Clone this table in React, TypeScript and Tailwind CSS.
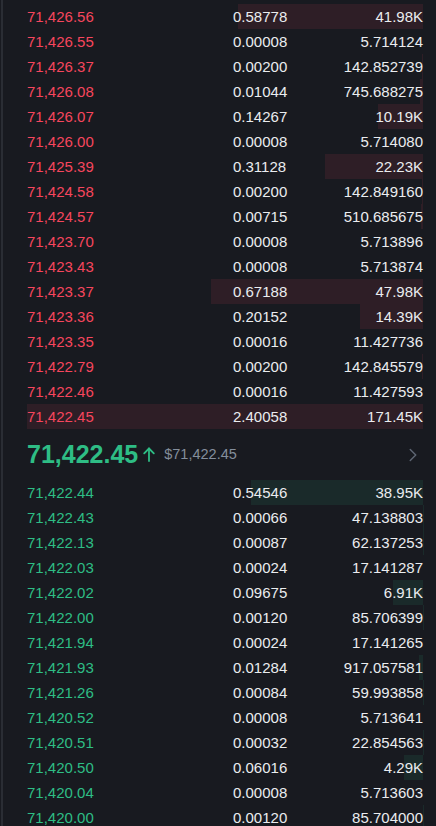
import { ChevronRight } from 'lucide-react'

type Row = { price: string; amount: string; total: string; usd: number }

const asks: Row[] = [
  { price: '71,426.56', amount: '0.58778', total: '41.98K', usd: 41980 },
  { price: '71,426.55', amount: '0.00008', total: '5.714124', usd: 5.7 },
  { price: '71,426.37', amount: '0.00200', total: '142.852739', usd: 142.85 },
  { price: '71,426.08', amount: '0.01044', total: '745.688275', usd: 745.69 },
  { price: '71,426.07', amount: '0.14267', total: '10.19K', usd: 10190 },
  { price: '71,426.00', amount: '0.00008', total: '5.714080', usd: 5.7 },
  { price: '71,425.39', amount: '0.31128', total: '22.23K', usd: 22230 },
  { price: '71,424.58', amount: '0.00200', total: '142.849160', usd: 142.85 },
  { price: '71,424.57', amount: '0.00715', total: '510.685675', usd: 510.69 },
  { price: '71,423.70', amount: '0.00008', total: '5.713896', usd: 5.7 },
  { price: '71,423.43', amount: '0.00008', total: '5.713874', usd: 5.7 },
  { price: '71,423.37', amount: '0.67188', total: '47.98K', usd: 47980 },
  { price: '71,423.36', amount: '0.20152', total: '14.39K', usd: 14390 },
  { price: '71,423.35', amount: '0.00016', total: '11.427736', usd: 11.43 },
  { price: '71,422.79', amount: '0.00200', total: '142.845579', usd: 142.85 },
  { price: '71,422.46', amount: '0.00016', total: '11.427593', usd: 11.43 },
  { price: '71,422.45', amount: '2.40058', total: '171.45K', usd: 171450 },
]

const bids: Row[] = [
  { price: '71,422.44', amount: '0.54546', total: '38.95K', usd: 38950 },
  { price: '71,422.43', amount: '0.00066', total: '47.138803', usd: 47.14 },
  { price: '71,422.13', amount: '0.00087', total: '62.137253', usd: 62.14 },
  { price: '71,422.03', amount: '0.00024', total: '17.141287', usd: 17.14 },
  { price: '71,422.02', amount: '0.09675', total: '6.91K', usd: 6910 },
  { price: '71,422.00', amount: '0.00120', total: '85.706399', usd: 85.71 },
  { price: '71,421.94', amount: '0.00024', total: '17.141265', usd: 17.14 },
  { price: '71,421.93', amount: '0.01284', total: '917.057581', usd: 917.06 },
  { price: '71,421.26', amount: '0.00084', total: '59.993858', usd: 59.99 },
  { price: '71,420.52', amount: '0.00008', total: '5.713641', usd: 5.71 },
  { price: '71,420.51', amount: '0.00032', total: '22.854563', usd: 22.85 },
  { price: '71,420.50', amount: '0.06016', total: '4.29K', usd: 4290 },
  { price: '71,420.04', amount: '0.00008', total: '5.713603', usd: 5.71 },
  { price: '71,420.00', amount: '0.00120', total: '85.704000', usd: 85.7 },
]

// depth bar: ~4.41px per 1K USD, capped at full row width
const barWidth = (usd: number) => Math.min(usd * 0.00441, 396)

function BookRow({ row, side }: { row: Row; side: 'ask' | 'bid' }) {
  return (
    <div className="relative flex h-[25px] items-center leading-[25px]">
      <div
        className={`absolute top-0 right-0 h-full ${side === 'ask' ? 'bg-[#2e1e26]' : 'bg-[#1a2a2a]'}`}
        style={{ width: barWidth(row.usd) }}
      />
      <span className={`relative w-[206px] ${side === 'ask' ? 'text-[#f6465d]' : 'text-[#2ebd85]'}`}>
        {row.price}
      </span>
      <span className="relative flex-1 text-[#eaecef]">{row.amount}</span>
      <span className="relative text-right text-[#eaecef]">{row.total}</span>
    </div>
  )
}

export default function App() {
  return (
    <div className="h-[826px] w-[436px] overflow-hidden bg-[#181a20] pl-px font-['Liberation_Sans',Arial,sans-serif] text-[15px]">
      <div className="h-full border-l-2 border-[#2a2d34] pt-[4px] pr-[13px] pl-[24px]">
        {/* asks */}
        <div>
          {asks.map((r) => (
            <BookRow key={r.price} row={r} side="ask" />
          ))}
        </div>

        {/* mid price */}
        <div className="flex h-[51px] items-center">
          <span className="text-[25px] font-bold text-[#2ebd85]">71,422.45</span>
          <svg width="12" height="15" viewBox="0 0 12 15" className="ml-[5px]" fill="none" stroke="#2ebd85" strokeWidth="1.8" strokeLinecap="round" strokeLinejoin="round">
            <path d="M6 1.5V14" />
            <path d="M1.2 6.3L6 1.5l4.8 4.8" />
          </svg>
          <span className="ml-[9px] text-[14.5px] text-[#848e9c]">$71,422.45</span>
          <ChevronRight size={22} strokeWidth={1.6} className="mr-[-1px] ml-auto text-[#5e6673]" />
        </div>

        {/* bids */}
        <div>
          {bids.map((r) => (
            <BookRow key={r.price} row={r} side="bid" />
          ))}
        </div>
      </div>
    </div>
  )
}
